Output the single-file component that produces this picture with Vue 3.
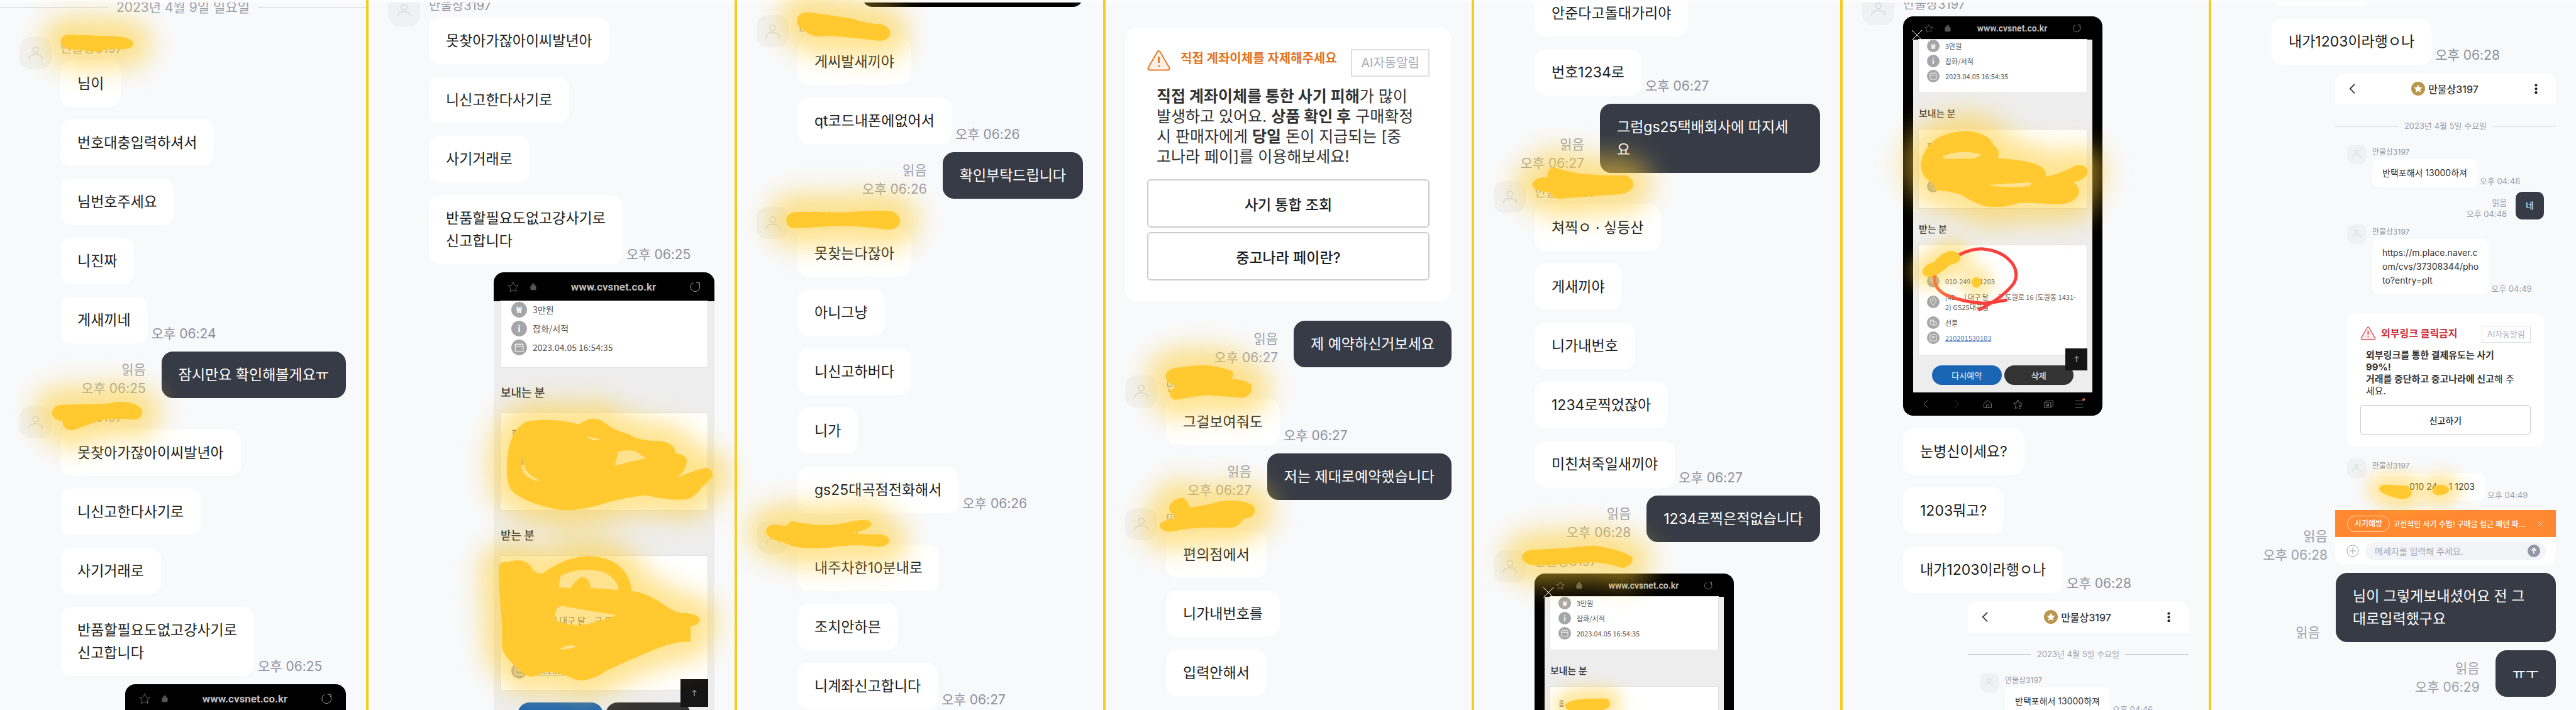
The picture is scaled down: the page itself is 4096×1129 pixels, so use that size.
<template>
    <main class="board">
        <section v-for="(col, c) in columns" :key="c" class="panel">
            <div class="thread" :style="{ marginTop: col.scroll + 'px' }">
                <template v-for="(item, i) in col.items" :key="i">
                    <div v-if="item.type === 'date'" class="date-row"><span>{{ item.text }}</span></div>

                    <div v-else-if="item.type === 'warn'" class="notice">
                        <div class="notice-head">
                            <svg class="notice-icon orange" viewBox="0 0 37 35">
                                <path d="M16 5 Q18.500 1 21 5 L35 29 Q37 33 32 33.500 H5 Q0 33 2 29 Z" />
                                <path class="mark" d="M18.500 12 V22 M18.500 26 V28" />
                            </svg>
                            <strong class="notice-title orange">직접 계좌이체를 자제해주세요</strong>
                            <span class="notice-tag">AI자동알림</span>
                        </div>
                        <p class="notice-text"><b>직접 계좌이체를 통한 사기 피해</b>가 많이<br>발생하고 있어요. <b>상품 확인 후</b> 구매확정<br>시 판매자에게 <b>당일</b> 돈이 지급되는 [중<br>고나라 페이]를 이용해보세요!</p>
                        <button type="button" class="notice-button">사기 통합 조회</button>
                        <button type="button" class="notice-button">중고나라 페이란?</button>
                    </div>

                    <div v-else class="group" :class="{ mine: item.mine }">
                        <div v-if="!item.mine" class="avatar" :class="{ blank: item.noName }">
                            <svg viewBox="0 0 26 26"><circle cx="13" cy="7" r="5" /><path d="M1 24 Q2 15 13 15 Q24 15 25 24" /></svg>
                        </div>
                        <div class="stack">
                            <div v-if="!item.mine && !item.noName" class="name">만물상3197</div>
                            <div v-for="(msg, m) in item.messages" :key="m" class="line">
                                <div v-if="item.mine && item.read" class="meta" :class="{ near: msg.kind }">읽음<br v-if="item.time">{{ item.time }}</div>

                                <div v-if="msg.kind === 'phone'" class="phone" :class="[msg.size, msg.part]">
                                    <div v-if="msg.part !== 'tail'" class="address-bar">
                                        <svg class="bar-icon" viewBox="0 0 20 20"><path d="M10 1.500 L12.700 7.200 L19 8 L14.400 12.300 L15.600 18.500 L10 15.500 L4.400 18.500 L5.600 12.300 L1 8 L7.300 7.200 Z" /></svg>
                                        <svg class="bar-icon lock" viewBox="0 0 20 20"><rect x="4" y="8" width="12" height="9" rx="1" /><path d="M7 8 V6 Q7 3 10 3 Q13 3 13 6 V8" /></svg>
                                        <span class="site">www.cvsnet.co.kr</span>
                                        <svg class="bar-icon reload" viewBox="0 0 20 20"><path d="M7 2.500 A8.300 8.300 0 1 0 16 4 M12 2.500 H18 V8" /></svg>
                                    </div>
                                    <svg v-if="msg.size === 'sm'" class="viewer-close" viewBox="0 0 16 16"><path d="M0 0 L16 16 M16 0 L0 16" /></svg>
                                    <div v-if="!msg.part || msg.part === 'sender'" class="receipt">
                                        <div class="receipt-card first">
                                            <div class="info-row"><i class="dot">₩</i>3만원</div>
                                            <div class="info-row"><i class="dot">i</i>잡화/서적</div>
                                            <div class="info-row"><i class="dot"><svg viewBox="0 0 20 20"><path d="M5 6 H15 V15 H5 Z M5 8.500 H15 M7 4 V6 M10 4 V6 M13 4 V6" /></svg></i>2023.04.05 16:54:35</div>
                                        </div>
                                        <h3>보내는 분</h3>
                                        <div class="receipt-card">
                                            <div class="info-row who">홍</div>
                                            <div class="info-row"><i class="dot"></i></div>
                                            <div class="info-row tall"><i class="dot"><svg viewBox="0 0 20 20"><path d="M10 16 L6 10 A4.500 4.500 0 1 1 14 10 Z" /><circle cx="10" cy="8" r="1" /></svg></i></div>
                                        </div>
                                        <template v-if="!msg.part">
                                            <h3>받는 분</h3>
                                            <div class="receipt-card last">
                                                <div class="info-row who"></div>
                                                <div class="info-row"><i class="dot"><svg viewBox="0 0 20 20"><path d="M7 5 Q5 6 6 9 Q8 13 11 14 Q14 15 15 13 L12.500 11 L11 12 Q9 11 8 9 L9 7.500 Z" /></svg></i><span>010-249<span class="masked"></span>1203</span></div>
                                                <div class="info-row tall"><i class="dot"><svg viewBox="0 0 20 20"><path d="M10 16 L6 10 A4.500 4.500 0 1 1 14 10 Z" /><circle cx="10" cy="8" r="1" /></svg></i><span>[42<span class="masked"></span>] 대구 달<span class="masked"></span>구 도원로 16 (도원동 1431-<br>2) GS25대곡점</span></div>
                                                <div class="info-row"><i class="dot"><svg viewBox="0 0 20 20"><path d="M5 6 H11 V13 H5 Z M5 8 H11 M11 9 H15 V14 H9 V13" /></svg></i>선불</div>
                                                <div class="info-row"><i class="dot"><svg viewBox="0 0 20 20"><path d="M5 5 H15 V15 H5 Z M8 8 H12 V10 H8 Z" /></svg></i><a href="#">210201530103</a></div>
                                            </div>
                                            <div class="receipt-actions">
                                                <button type="button" class="rebook">다시예약</button>
                                                <button type="button" class="remove">삭제</button>
                                            </div>
                                            <button type="button" class="to-top" aria-label="맨 위로"><svg viewBox="0 0 12 12"><path d="M6 11 V2 M2.500 5 L6 1.500 L9.500 5" /></svg></button>
                                        </template>
                                    </div>
                                    <div v-if="!msg.part || msg.part === 'tail'" class="nav-bar">
                                        <svg viewBox="0 0 20 20"><path d="M14 3 L6 10 L14 17" /></svg>
                                        <svg class="dim" viewBox="0 0 20 20"><path d="M6 3 L14 10 L6 17" /></svg>
                                        <svg viewBox="0 0 20 20"><path d="M3 9 L10 3 L17 9 V17 H3 Z M7.500 17 V13 Q7.500 11 10 11 Q12.500 11 12.500 13 V17" /></svg>
                                        <svg viewBox="0 0 20 20"><path d="M10 17 L5 18 L6 12.500 L2 8.500 L7.500 8 L10 2 L12.500 8 L18 8.500 M12 12 H18 M12 15 H17 M12 18 H15" /></svg>
                                        <svg viewBox="0 0 20 20"><path d="M2 7 H14 V17 H2 Z M5 7 V4 H18 V14 H14 M6 10 H10 V14 H6 Z M6 12 H10" /></svg>
                                        <svg viewBox="0 0 20 20"><path d="M2 4 H17 M2 10 H17 M2 16 H17" /><circle class="badge" cx="18" cy="1.500" r="2.500" /></svg>
                                    </div>
                                </div>

                                <div v-else-if="msg.kind === 'capture'" class="capture">
                                    <header class="capture-head">
                                        <svg class="back" viewBox="0 0 11 20"><path d="M10 2 L2 10 L10 18" /></svg>
                                        <svg class="medal" viewBox="0 0 22 22"><circle cx="11" cy="11" r="11" /><path d="M11 4.500 L13 8.800 L17.500 9.300 L14.200 12.400 L15.100 17 L11 14.700 L6.900 17 L7.800 12.400 L4.500 9.300 L9 8.800 Z" /></svg>
                                        <span>만물상3197</span>
                                        <svg class="more" viewBox="0 0 6 20"><circle cx="3" cy="3" r="2.500" /><circle cx="3" cy="10" r="2.500" /><circle cx="3" cy="17" r="2.500" /></svg>
                                    </header>
                                    <div class="date-row"><span>2023년 4월 5일 수요일</span></div>
                                    <div class="capture-body">
                                        <template v-for="(sub, s) in captureItems.slice(0, msg.count)" :key="s">
                                            <div v-if="sub.warn" class="notice">
                                                <div class="notice-head">
                                                    <svg class="notice-icon red" viewBox="0 0 37 35">
                                                        <path d="M16 5 Q18.500 1 21 5 L35 29 Q37 33 32 33.500 H5 Q0 33 2 29 Z" />
                                                        <path class="mark" d="M18.500 12 V22 M18.500 26 V28" />
                                                    </svg>
                                                    <strong class="notice-title red">외부링크 클릭금지</strong>
                                                    <span class="notice-tag">AI자동알림</span>
                                                </div>
                                                <p class="notice-text"><b>외부링크를 통한 결제유도는 사기<br>99%!<br>거래를 중단하고 중고나라에 신고</b>해 주<br>세요.</p>
                                                <button type="button" class="notice-button">신고하기</button>
                                            </div>
                                            <div v-else class="group" :class="{ mine: sub.mine }">
                                                <div v-if="!sub.mine" class="avatar">
                                                    <svg viewBox="0 0 26 26"><circle cx="13" cy="7" r="5" /><path d="M1 24 Q2 15 13 15 Q24 15 25 24" /></svg>
                                                </div>
                                                <div class="stack">
                                                    <div v-if="!sub.mine" class="name">만물상3197</div>
                                                    <div class="line">
                                                        <div v-if="sub.mine" class="meta">읽음<br>{{ sub.time }}</div>
                                                        <div v-if="sub.phone" class="bubble"><span class="masked name-mask"></span> 010 24<span class="masked"></span>1 1203</div>
                                                        <div v-else class="bubble">{{ sub.text }}</div>
                                                        <div v-if="!sub.mine" class="time">{{ sub.time }}</div>
                                                    </div>
                                                </div>
                                            </div>
                                        </template>
                                    </div>
                                    <template v-if="msg.count === captureItems.length">
                                        <div class="banner">
                                            <span class="banner-tag">사기예방</span>
                                            <span class="banner-text">고전적인 사기 수법! 구매글 접근 패턴 파...</span>
                                            <svg viewBox="0 0 10 10"><path d="M1 1 L9 9 M9 1 L1 9" /></svg>
                                        </div>
                                        <div class="composer">
                                            <svg class="plus" viewBox="0 0 22 22"><circle cx="11" cy="11" r="10" /><path d="M11 5 V17 M5 11 H17" /></svg>
                                            <div class="composer-field">
                                                <input type="text" placeholder="메세지를 입력해 주세요." aria-label="메세지">
                                                <svg class="send" viewBox="0 0 22 22"><circle cx="11" cy="11" r="11" /><path d="M11 16 V7 M7 10.500 L11 6.500 L15 10.500" /></svg>
                                            </div>
                                        </div>
                                    </template>
                                </div>

                                <div v-else class="bubble" :class="{ wrapped: msg.includes('\n') }">{{ msg }}</div>

                                <div v-if="!item.mine && item.time && m === item.messages.length - 1" class="time">{{ item.time }}</div>
                            </div>
                        </div>
                    </div>
                </template>
            </div>
        </section>

        <!-- hand drawn marker strokes -->
        <svg class="marker" viewBox="0 0 4096 1129" preserveAspectRatio="xMinYMin meet" aria-hidden="true">
            <defs>
                <filter id="glow" x="-100%" y="-500%" width="300%" height="1100%"><feGaussianBlur stdDeviation="54 28" /></filter>
                <filter id="glow-small" x="-400%" y="-600%" width="900%" height="1300%"><feGaussianBlur stdDeviation="34 18" /></filter>
                <linearGradient id="pen" x1="0" x2="1"><stop offset="0" stop-color="#ff7a38" /><stop offset="0.400" stop-color="#fb3f3c" /></linearGradient>
            </defs>
            <g v-for="(s, k) in strokes" :key="k" :transform="`translate(${s.x} 0) scale(${s.w} 0.7198)`">
                <path class="glow" :class="{ small: s.small }" :d="s.d" :filter="s.small ? 'url(#glow-small)' : 'url(#glow)'" />
            </g>
            <g transform="translate(2924.2 0) scale(0.376 0.7198)">
                <path class="pen" d="M508 563 Q560 549 610 550 Q690 554 730 580 Q762 603 740 625 Q700 655 594 684 M408 603 Q388 632 450 651 Q530 668 610 670 Q660 668 706 663" />
            </g>
            <g v-for="(s, k) in strokes" :key="'f' + k" :transform="`translate(${s.x} 0) scale(${s.w} 0.7198)`">
                <path class="fill" :d="s.d" />
            </g>
        </svg>
    </main>
</template>

<script setup>
const captureItems = [
    { text: '반택포해서 13000하져', time: '오후 04:46' },
    { mine: true, text: '네', time: '오후 04:48' },
    { text: 'https://m.place.naver.c\nom/cvs/37308344/pho\nto?entry=plt', time: '오후 04:49' },
    { warn: true },
    { phone: true, time: '오후 04:49' }
]

// scroll = how far each chat is moved from the top of its panel
const columns = [
    {
        scroll: -7,
        items: [
            { type: 'date', text: '2023년 4월 9일 일요일' },
            { messages: ['님이', '번호대충입력하셔서', '님번호주세요', '니진짜', '게새끼네'], time: '오후 06:24' },
            { mine: true, read: true, messages: ['잠시만요 확인해볼게요ㅠ'], time: '오후 06:25' },
            { messages: ['못찾아가잖아이씨발년아', '니신고한다사기로', '사기거래로', '반품할필요도없고걍사기로\n신고합니다'], time: '오후 06:25' },
            { mine: true, messages: [{ kind: 'phone', size: 'lg', part: 'bar' }] }
        ]
    },
    {
        scroll: -13,
        items: [
            { messages: ['못찾아가잖아이씨발년아', '니신고한다사기로', '사기거래로', '반품할필요도없고걍사기로\n신고합니다'], time: '오후 06:25' },
            { mine: true, messages: [{ kind: 'phone', size: 'lg' }] }
        ]
    },
    {
        scroll: -39,
        items: [
            { mine: true, messages: [{ kind: 'phone', size: 'lg', part: 'tail' }] },
            { messages: ['게씨발새끼야', 'qt코드내폰에없어서'], time: '오후 06:26' },
            { mine: true, read: true, messages: ['확인부탁드립니다'], time: '오후 06:26' },
            { messages: ['못찾는다잖아', '아니그냥', '니신고하버다', '니가', 'gs25대곡점전화해서'], time: '오후 06:26' },
            { messages: ['내주차한10분내로', '조치안하믄', '니계좌신고합니다'], time: '오후 06:27' }
        ]
    },
    {
        scroll: 40,
        items: [
            { type: 'warn' },
            { mine: true, read: true, messages: ['제 예약하신거보세요'], time: '오후 06:27' },
            { messages: ['그걸보여줘도'], time: '오후 06:27' },
            { mine: true, read: true, messages: ['저는 제대로예약했습니다'], time: '오후 06:27' },
            { messages: ['편의점에서', '니가내번호를', '입력안해서'] }
        ]
    },
    {
        scroll: -20,
        items: [
            { noName: true, messages: ['안준다고돌대가리야', '번호1234로'], time: '오후 06:27' },
            { mine: true, read: true, messages: ['그럼gs25택배회사에 따지세\n요'], time: '오후 06:27' },
            { messages: ['쳐찍ㅇ · 싷등산', '게새끼야', '니가내번호', '1234로찍었잖아', '미친쳐죽일새끼야'], time: '오후 06:27' },
            { mine: true, read: true, messages: ['1234로찍은적없습니다'], time: '오후 06:28' },
            { messages: [{ kind: 'phone', size: 'sm', part: 'sender' }] }
        ]
    },
    {
        scroll: -15,
        items: [
            { messages: [{ kind: 'phone', size: 'sm' }, '눈병신이세요?', '1203뭐고?', '내가1203이라행ㅇ나'], time: '오후 06:28' },
            { mine: true, messages: [{ kind: 'capture', count: 1 }] }
        ]
    },
    {
        scroll: -69,
        items: [
            { noName: true, messages: ['1203뭐고?', '내가1203이라행ㅇ나'], time: '오후 06:28' },
            { mine: true, read: true, messages: [{ kind: 'capture', count: captureItems.length }], time: '오후 06:28' },
            { mine: true, read: true, messages: ['님이 그렇게보내셨어요 전 그\n대로입력했구요'] },
            { mine: true, read: true, messages: ['ㅠㅜ'], time: '오후 06:29' }
        ]
    }
]

const strokes = [
    { x: 0, w: 0.3737, d: 'M260 92 Q262 76 300 77 Q400 80 470 80 Q566 82 566 97 Q562 110 500 108 Q460 105 430 112 Q390 116 350 109 Q262 112 260 92Z' },
    { x: 0, w: 0.3737, d: 'M222 912 Q226 894 270 895 L450 893 Q520 884 570 893 Q606 900 605 912 Q600 928 560 926 Q480 922 430 928 Q380 936 330 946 Q290 956 270 940 Q268 930 272 929 Q225 930 222 912Z' },
    { x: 582.3, w: 0.376, d: 'M596 1030 Q600 950 680 932 Q780 922 900 938 Q960 915 1010 935 Q1040 950 1110 960 Q1150 975 1240 975 Q1305 978 1307 1002 Q1355 1005 1355 1020 Q1350 1040 1310 1058 Q1390 1038 1440 1034 Q1465 1038 1464 1052 Q1440 1068 1420 1075 Q1380 1105 1340 1103 Q1270 1105 1180 1093 Q1100 1098 1030 1108 Q900 1130 820 1126 Q660 1110 610 1080 Q592 1055 596 1030Z M930 962 L1000 972 Q950 978 930 962Z M1050 1030 L1065 997 Q1130 990 1150 1000 L1187 1013 Q1100 1022 1050 1030Z M668 1002 Q645 1022 662 1042 Q690 1065 745 1063 Q650 1045 668 1002Z' },
    { x: 582.3, w: 0.376, d: 'M562 1250 Q570 1240 600 1242 Q680 1230 705 1260 Q740 1275 760 1262 Q850 1230 940 1229 Q1060 1232 1100 1270 Q1118 1285 1122 1306 Q1180 1310 1240 1330 Q1290 1350 1330 1355 Q1405 1355 1410 1370 Q1405 1382 1370 1382 L1370 1417 Q1310 1415 1240 1430 Q1100 1460 1020 1480 Q920 1515 860 1495 Q790 1480 745 1485 Q690 1505 650 1480 Q580 1450 576 1430 Q576 1380 570 1340 Q562 1300 562 1250Z M820 1272 Q900 1250 1000 1262 Q1070 1280 1068 1305 Q1000 1300 948 1300 Q945 1275 910 1275 Q880 1285 865 1300 L812 1298Z M800 1370 Q790 1340 830 1338 Q950 1350 1060 1358 Q1000 1375 900 1382 Q830 1380 800 1370Z M815 1435 Q850 1420 895 1427 Q860 1437 815 1435Z' },
    { x: 1168.2, w: 0.376, d: 'M265 45 Q270 24 330 29 L500 42 Q560 54 620 54 Q660 62 657 76 Q645 92 600 89 Q500 82 400 78 Q330 84 303 70 Q262 58 265 45Z' },
    { x: 1168.2, w: 0.376, d: 'M219 486 Q222 468 270 469 L460 470 Q600 464 670 468 Q700 478 698 490 Q690 508 640 506 Q500 496 400 499 Q320 503 240 503 Q220 498 219 486Z' },
    { x: 1168.2, w: 0.376, d: 'M133 1174 Q138 1157 180 1160 Q220 1165 228 1158 Q235 1148 270 1155 Q400 1168 500 1152 Q575 1145 579 1158 Q565 1172 490 1177 Q560 1183 620 1181 Q655 1186 653 1196 Q640 1209 600 1207 Q500 1200 400 1209 Q260 1215 210 1198 Q135 1190 133 1174Z' },
    { x: 1752.3, w: 0.376, d: 'M270 830 Q275 812 340 812 Q450 800 550 820 Q560 828 545 838 Q600 838 630 850 Q640 870 600 878 Q500 874 440 872 Q370 876 310 883 Q280 878 290 862 Q320 856 315 850 Q270 848 270 830Z' },
    { x: 1752.3, w: 0.376, d: 'M285 1122 Q295 1102 340 1100 Q370 1108 365 1122 Q420 1120 500 1108 Q600 1103 640 1118 Q655 1132 630 1142 Q590 1145 590 1152 Q570 1168 520 1165 Q400 1163 330 1170 Q260 1180 244 1162 Q248 1150 300 1148 Q320 1142 310 1138 Q285 1134 285 1122Z' },
    { x: 2336.5, w: 0.3783, d: 'M265 408 Q270 392 330 392 Q325 376 350 370 Q400 378 460 384 Q560 390 660 388 Q690 398 688 410 Q680 424 640 428 Q520 432 390 438 Q350 440 345 425 Q270 422 265 408Z' },
    { x: 2336.5, w: 0.3783, d: 'M222 1232 Q225 1214 280 1215 Q400 1213 520 1206 Q640 1214 685 1232 Q685 1252 640 1254 Q600 1245 520 1241 Q400 1247 270 1248 Q225 1245 222 1232Z' },
    { x: 2336.5, w: 0.3783, small: true, d: 'M405 1556 Q430 1542 580 1544 Q595 1552 585 1562 Q570 1568 540 1570 L420 1570 Q400 1565 405 1556Z' },
    { x: 2924.2, w: 0.376, d: 'M347 365 Q350 335 400 312 Q450 290 550 290 Q640 298 650 320 Q685 332 670 350 Q860 356 872 380 Q870 390 880 391 Q960 380 1000 366 Q1050 362 1050 380 Q1045 396 990 402 Q1015 412 1014 425 Q1000 450 920 451 Q800 446 760 448 Q680 462 610 454 Q540 440 520 430 Q460 420 410 420 Q400 402 385 400 Q350 390 347 365Z M440 345 Q500 328 605 340 Q580 352 560 351 L440 352Z M620 408 L810 402 Q820 410 800 412 Q700 418 620 408Z' },
    { x: 2924.2, w: 0.376, small: true, d: 'M353 600 Q360 585 400 580 Q440 555 480 555 Q515 560 513 572 Q500 582 470 584 Q430 605 385 611 Q353 610 353 600Z' },
    { x: 2924.2, w: 0.376, small: true, d: 'M562 624 a19 11 0 1 0 38 0 a19 11 0 1 0 -38 0Z' },
    { x: 3508.3, w: 0.3748, small: true, d: 'M733 1080 Q740 1068 780 1072 L850 1074 Q875 1082 868 1094 Q850 1104 820 1101 Q740 1092 733 1080Z' },
    { x: 3508.3, w: 0.3748, small: true, d: 'M960 1084 Q965 1070 1000 1072 Q1030 1074 1028 1084 Q1015 1094 985 1093 Q960 1092 960 1084Z' }
]
</script>

<style>
body {
    margin: 0;
    background: #f8f9fb;
}
</style>

<style scoped>
.board {
    position: relative;
    display: grid;
    grid-template-columns: repeat(6, 586fr) 580fr;
    height: 100vh;
    overflow: hidden;
    font-family: Inter, "Noto Sans CJK KR", sans-serif;
    color: #1b1d21;
}

.board * {
    box-sizing: border-box;
}

button, input {
    font-family: inherit;
    padding: 0;
}

.panel {
    /* sizes of a full scale chat */
    --text: 23px;
    --line: 36px;
    --pad-y: 19px;
    --pad-x: 27px;
    --radius: 18px;
    --small: 21px;
    --small-line: 30px;
    --name: 20px;
    --name-line: 37px;
    --avatar: 51px;
    --avatar-gap: 14px;
    --time-gap: 6px;
    --meta-gap: 25px;
    --step: 13px;
    min-width: 0;
    overflow: hidden;
    background: #f8f9fb;
    border-right: 4px solid #f6cd1f;
    background-clip: padding-box;
}

.panel:last-of-type {
    border-right: 0;
}

.panel::before {
    content: "";
    display: block;
    position: relative;
    z-index: 2;
    height: 4px;
    background: #fdfdfe;
}

.thread {
    display: flex;
    flex-direction: column;
    gap: var(--step);
}

.date-row {
    display: flex;
    align-items: center;
    gap: 14px;
    margin-bottom: 19px;
    font-size: var(--small);
    line-height: var(--small-line);
    color: #9a9fab;
    white-space: nowrap;
}

.date-row::before, .date-row::after {
    content: "";
    flex: 1;
    height: 1px;
    background: #c3c7d0;
}

.group {
    display: flex;
    gap: var(--avatar-gap);
    padding: 0 32px 0 31px;
}

.group.mine {
    justify-content: flex-end;
}

.avatar {
    display: flex;
    align-items: center;
    justify-content: center;
    flex: none;
    width: var(--avatar);
    height: var(--avatar);
    border-radius: 35%;
    background: #f0f1f2;
}

.avatar svg {
    width: 46%;
    fill: none;
    stroke: #d9dbdd;
    stroke-width: 2;
}

.avatar.blank {
    visibility: hidden;
}

.stack {
    display: flex;
    flex-direction: column;
    gap: 20px;
}

.name {
    margin-bottom: -20px;
    font-size: var(--name);
    line-height: var(--name-line);
    color: #92969f;
}

.line {
    display: flex;
    align-items: flex-end;
}

.mine .line {
    justify-content: flex-end;
}

.bubble {
    padding: var(--pad-y) var(--pad-x);
    border-radius: var(--radius);
    background: #fff;
    font-size: var(--text);
    line-height: var(--line);
    white-space: pre;
}

.mine .bubble {
    background: #363b46;
    color: #fff;
}

.mine .wrapped {
    min-width: 350px;
}

.time, .meta {
    font-size: var(--small);
    line-height: var(--small-line);
    color: #8d919b;
    white-space: nowrap;
}

.time {
    margin-left: var(--time-gap);
}

.meta {
    margin-right: var(--meta-gap);
    text-align: right;
    color: #9a9fab;
}

.meta.near {
    margin-right: 12px;
}

/* automatic notice */
.notice {
    --inset: 35px;
    display: flex;
    flex-direction: column;
    margin: 0 32px 17px 31px;
    padding: 34px var(--inset);
    border-radius: 20px;
    background: #fff;
}

.notice-head {
    display: flex;
    align-items: flex-start;
}

.notice-icon {
    width: 37px;
    height: 35px;
    margin-right: 16px;
    stroke-width: 2;
}

.notice-icon.orange {
    fill: #fdf0e6;
    stroke: #e77b2c;
}

.notice-icon.red {
    fill: #fde8ea;
    stroke: #d9505b;
}

.notice-icon .mark {
    stroke-width: 3;
}

.notice-title {
    font-size: 20px;
    line-height: 30px;
    white-space: nowrap;
}

.notice-title.orange {
    color: #e4731f;
}

.notice-title.red {
    color: #cf2f3c;
}

.notice-tag {
    margin-left: auto;
    padding: 0 14px;
    border: 2px solid #dcdee3;
    font-size: 20px;
    line-height: 40px;
    color: #a9adb8;
    white-space: nowrap;
}

.notice-text {
    margin: 15px 0 13px 15px;
    font-size: 25px;
    line-height: 32px;
    color: #333;
    white-space: nowrap;
}

.notice-button {
    height: 77px;
    margin-top: 7px;
    border: 2px solid #cbccd0;
    border-radius: 6px;
    background: #fff;
    color: #1b1d21;
    font-size: 23px;
    font-weight: 500;
}

/* browser picture sent in the chat */
.phone {
    position: relative;
    overflow: hidden;
    border-radius: 16px;
    background: #000;
    font-family: "Noto Sans CJK KR", sans-serif;
    color: #555;
}

.phone.bar {
    border-radius: 16px 16px 0 0;
}

.phone.lg {
    --bar: 46px;
    --edge: 11px;
    --row: 30px;
    --row-tall: 51px;
    --icon: 25px;
    --font: 14px;
    --title: 18px;
    --title-line: 73px;
    --card-pad: 17px;
    --who-gap: 9px;
    --press: 38px;
    --side: 38px;
    --top: 44px;
    width: 351px;
}

.phone.sm {
    --bar: 37px;
    --edge: 9px;
    --row: 24px;
    --row-tall: 42px;
    --icon: 20px;
    --font: 11px;
    --title: 15px;
    --title-line: 59px;
    --card-pad: 14px;
    --who-gap: 7px;
    --press: 31px;
    --side: 30px;
    --top: 35px;
    width: 317px;
    padding: 0 16px;
}

.address-bar {
    display: flex;
    align-items: center;
    height: var(--bar);
    padding: 0 22px;
    color: #bdbdbd;
    font-family: Roboto, sans-serif;
    font-weight: 700;
}

.bar-icon {
    width: 18px;
    height: 18px;
    fill: none;
    stroke: #777;
    stroke-width: 1;
}

.bar-icon.lock {
    width: 14px;
    margin-left: 16px;
    fill: #555;
    stroke: #555;
}

.bar-icon.reload {
    stroke: #aaa;
}

.site {
    flex: 1;
    text-align: center;
    font-size: 17px;
}

.sm .address-bar {
    padding: 0 18px;
}

.sm .bar-icon {
    width: 14px;
    height: 14px;
}

.sm .site {
    font-size: 14px;
}

.viewer-close {
    position: absolute;
    left: 14px;
    top: 22px;
    width: 16px;
    height: 16px;
    z-index: 1;
    stroke: #fff;
    stroke-width: 1;
}

.receipt {
    position: relative;
    padding: 0 var(--edge);
    background: #ededed;
}

.receipt-card {
    padding: var(--card-pad) 0 var(--card-pad) 17px;
    background: #fff;
    box-shadow: 0 0 0 1px #e2e2e2;
    font-size: var(--font);
}

.sm .receipt-card {
    padding-left: 13px;
}

.receipt-card.first {
    overflow: hidden;
    padding-top: 0;
}

.first .info-row:first-child {
    margin-top: -2px;
}

.receipt-card.last {
    padding-bottom: 16px;
}

.info-row {
    display: flex;
    align-items: center;
    gap: 9px;
    height: var(--row);
    line-height: 20px;
    white-space: nowrap;
}

.sm .info-row {
    line-height: 16px;
}

.info-row.tall {
    height: var(--row-tall);
}

.info-row.who {
    margin-bottom: var(--who-gap);
}

.info-row a {
    color: #3f74b8;
}

.dot {
    display: flex;
    align-items: center;
    justify-content: center;
    flex: none;
    width: var(--icon);
    height: var(--icon);
    border-radius: 50%;
    background: #a6a6a6;
    color: #fff;
    font-style: normal;
    font-weight: 700;
}

.dot svg {
    width: 100%;
    fill: none;
    stroke: #eee;
    stroke-width: 1;
}

.masked {
    display: inline-block;
    width: 14px;
}

.receipt h3 {
    margin: 0;
    padding-top: 6px;
    height: var(--title-line);
    font-size: var(--title);
    line-height: calc(var(--title-line) - 6px);
    font-weight: 500;
    color: #333;
}

.receipt-actions {
    display: flex;
    gap: 4px;
    margin: 0 calc(var(--side) - var(--edge));
    padding: 16px 0 12px;
}

.lg .receipt-actions {
    padding: 20px 0 12px;
}

.receipt-actions button {
    flex: 1;
    height: var(--press);
    border: 0;
    border-radius: 20px;
    color: #fff;
    font-size: 13px;
}

.receipt-actions .rebook {
    background: #1b65b5;
}

.receipt-actions .remove {
    background: #333;
}

.to-top {
    position: absolute;
    right: 8px;
    bottom: 35px;
    width: var(--top);
    height: var(--top);
    border: 0;
    background: #151515;
}

.lg .to-top {
    right: 10px;
    bottom: 43px;
}

.to-top svg {
    width: 12px;
    fill: none;
    stroke: #ddd;
    stroke-width: 1;
}

.nav-bar {
    display: flex;
    align-items: center;
    justify-content: space-between;
    height: var(--bar);
    padding: 0 12px;
}

.nav-bar svg {
    width: 17px;
    overflow: visible;
    fill: none;
    stroke: #8a8a8a;
    stroke-width: 1;
}

.nav-bar .dim {
    stroke: #444;
}

.nav-bar .badge {
    fill: #e8622c;
    stroke: none;
}

.phone.tail svg {
    visibility: hidden;
}

/* chat picture sent in the chat */
.capture {
    --text: 14px;
    --line: 22px;
    --pad-y: 11px;
    --pad-x: 16px;
    --radius: 10px;
    --small: 13px;
    --small-line: 18px;
    --name: 12px;
    --name-line: 23px;
    --avatar: 31px;
    --avatar-gap: 9px;
    --time-gap: 4px;
    --meta-gap: 14px;
    width: 351px;
    overflow: hidden;
    border-radius: 16px;
    background: #f8f9fb;
    color: #333;
}

.capture-head {
    display: flex;
    align-items: center;
    height: 50px;
    padding: 0 29px 0 22px;
    background: #fff;
    font-size: 16px;
    font-weight: 500;
}

.back {
    width: 10px;
    margin-right: auto;
    fill: none;
    stroke: #333;
    stroke-width: 2;
}

.medal {
    width: 22px;
    margin-right: 5px;
    fill: #b9964b;
}

.medal path {
    fill: #fff;
}

.more {
    width: 5px;
    margin-left: auto;
    fill: #222;
}

.capture .date-row {
    gap: 9px;
    margin: 25px 0 21px;
}

.capture-body {
    display: flex;
    flex-direction: column;
    gap: 8px;
    padding: 0 19px;
}

.capture .group {
    padding: 0;
}

.capture .group:not(.mine) .bubble {
    background: #fff;
    color: #333;
}

.capture .line {
    justify-content: flex-start;
}

.capture .stack {
    align-items: flex-start;
}

.capture .group:not(.mine) .time {
    color: #9a9fab;
}

.capture .masked {
    width: 18px;
}

.capture .name-mask {
    width: 39px;
}

.capture .notice {
    --inset: 21px;
    margin: 22px 0 10px;
    padding: 20px var(--inset);
    border-radius: 12px;
}

.capture .notice-icon {
    width: 25px;
    height: 23px;
    margin-right: 8px;
}

.capture .notice-title {
    font-size: 16px;
    line-height: 24px;
}

.capture .notice-tag {
    padding: 0 8px;
    border-width: 1px;
    font-size: 13px;
    line-height: 25px;
}

.capture .notice-text {
    margin: 10px 0 6px 9px;
    font-size: 15px;
    line-height: 19px;
}

.capture .notice-button {
    height: 47px;
    border-width: 1px;
    border-radius: 4px;
    font-size: 14px;
}

.banner {
    display: flex;
    align-items: center;
    height: 43px;
    margin-top: 15px;
    padding: 0 20px 0 19px;
    background: #ff8831;
    color: #fff;
    font-size: 12px;
    font-weight: 500;
    white-space: nowrap;
}

.banner-tag {
    padding: 0 11px;
    margin-right: 5px;
    border: 1px solid #ffd9ba;
    border-radius: 13px;
    line-height: 24px;
}

.banner svg {
    width: 9px;
    margin-left: auto;
    stroke: #ffd9ba;
}

.composer {
    display: flex;
    align-items: center;
    gap: 10px;
    height: 44px;
    padding: 0 16px 0 18px;
    background: #fff;
}

.plus {
    width: 20px;
    fill: none;
    stroke: #9297a3;
}

.composer-field {
    display: flex;
    align-items: center;
    flex: 1;
    height: 29px;
    padding: 0 9px 0 15px;
    border-radius: 15px;
    background: #f3f4f8;
}

.composer-field input {
    flex: 1;
    min-width: 0;
    border: 0;
    background: none;
    font-size: 14px;
}

.composer-field input::placeholder {
    color: #a3a7b4;
}

.send {
    width: 20px;
    fill: #9297a8;
}

.send path {
    fill: none;
    stroke: #fff;
    stroke-width: 2;
}

/* marker strokes lie over every chat */
.marker {
    position: absolute;
    left: 0;
    top: 0;
    width: 100%;
    z-index: 3;
    pointer-events: none;
}

.marker path {
    vector-effect: non-scaling-stroke;
}

.marker .glow {
    fill: #ffcc33;
    stroke: #ffcc33;
    stroke-width: 60px;
    stroke-linejoin: round;
    opacity: 0.55;
}

.marker .glow.small {
    stroke-width: 36px;
    opacity: 0.5;
}

.marker .fill {
    fill: #ffc92f;
    fill-rule: evenodd;
    stroke: #ffc92f;
    stroke-width: 1px;
}

.marker .pen {
    fill: none;
    stroke: url(#pen);
    stroke-width: 5px;
    stroke-linecap: round;
}
</style>
